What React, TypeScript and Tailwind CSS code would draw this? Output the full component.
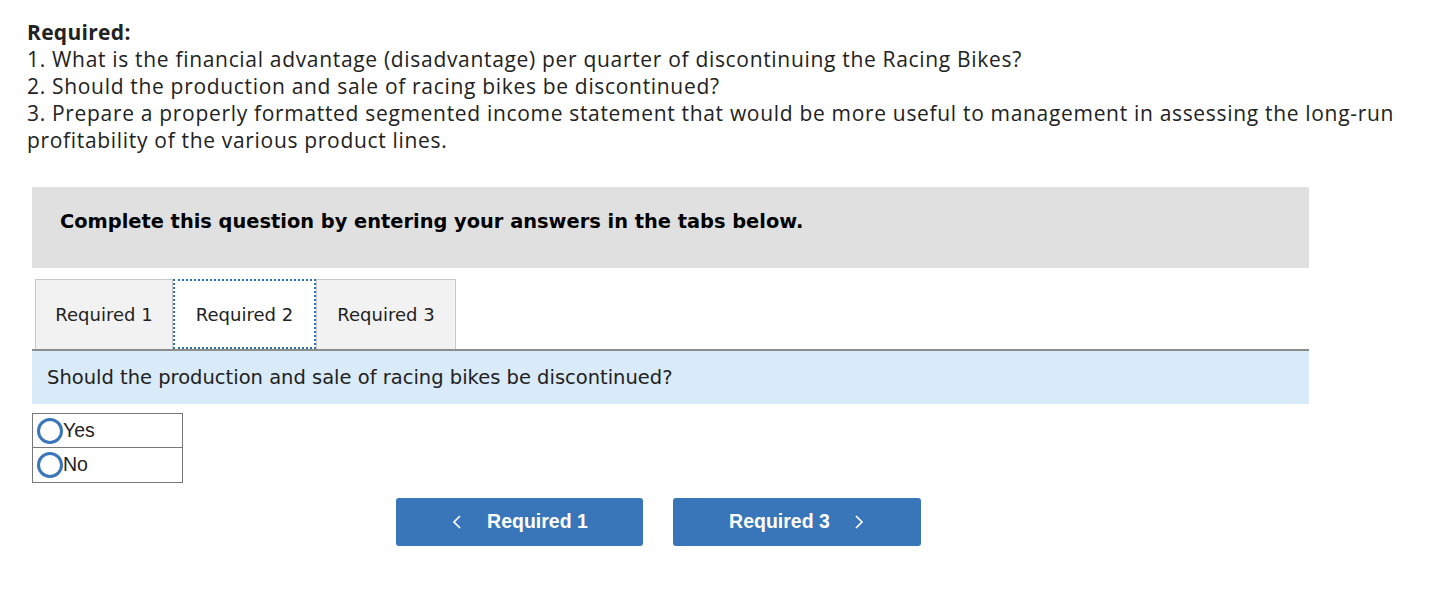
import { FC } from "react";

const Radio: FC<{ label: string; last?: boolean }> = ({ label, last }) => (
    <label className={`flex items-center h-[34px] pl-[4px] ${last ? "" : "border-b border-[#777]"}`}>
        <span className="inline-block w-[26px] h-[26px] rounded-full border-[3px] border-[#3a76b9] bg-white"></span>
        <span className="text-[19.5px] text-[#222] leading-none" style={{ fontFamily: '"Liberation Sans", Arial, sans-serif' }}>{label}</span>
    </label>
);

const App: FC = () => {
    return (
        <div className="w-[1451px] h-[590px] bg-white text-[#222]">
            <div className="pl-[27px] pt-[19px] text-[21px] leading-[27px] tracking-[0.68px]" style={{ fontFamily: '"Open Sans", Lato, sans-serif' }}>
                <div className="font-bold tracking-[0.3px]">Required:</div>
                <div>1. What is the financial advantage (disadvantage) per quarter of discontinuing the Racing Bikes?</div>
                <div>2. Should the production and sale of racing bikes be discontinued?</div>
                <div>3. Prepare a properly formatted segmented income statement that would be more useful to management in assessing the long-run</div>
                <div>profitability of the various product lines.</div>
            </div>

            <div className="ml-[32px] w-[1277px] mt-[33px]" style={{ fontFamily: '"DejaVu Sans", Verdana, sans-serif' }}>
                <div className="h-[81px] bg-[#e0e0e0] flex items-center pl-[28px] pb-[12px]">
                    <span className="font-bold text-[19.4px] text-black">Complete this question by entering your answers in the tabs below.</span>
                </div>

                <div className="mt-[11px] flex pl-[3px] h-[70px]">
                    <div className="w-[138px] bg-[#f2f2f2] border border-b-0 border-[#c8c8c8] flex items-center justify-center text-[18px] text-[#222]">Required 1</div>
                    <div className="w-[143px] bg-white border-2 border-dotted border-[#2f6fb8] flex items-center justify-center text-[18px] text-[#222]">Required 2</div>
                    <div className="w-[140px] bg-[#f2f2f2] border border-b-0 border-[#c8c8c8] flex items-center justify-center text-[18px] text-[#222]">Required 3</div>
                </div>

                <div className="h-[55px] bg-[#d9eaf8] border-t-2 border-[#8d8d8d] flex items-center pl-[15px]">
                    <span className="text-[19.5px] text-[#222]">Should the production and sale of racing bikes be discontinued?</span>
                </div>

                <div className="mt-[9px] w-[151px] border border-[#777]">
                    <Radio label="Yes" />
                    <Radio label="No" last />
                </div>

                <div className="mt-[15px] flex gap-[30px] pl-[364px]" style={{ fontFamily: '"Liberation Sans", Arial, sans-serif' }}>
                    <button className="w-[247px] h-[48px] bg-[#3875b9] rounded-[3px] text-white font-bold text-[19.5px] flex items-center justify-center">
                        <svg width="12" height="16" viewBox="0 0 12 16" className="mr-[24px]" fill="none" stroke="white" strokeWidth="1.7"><path d="M9 2 L3 8 L9 14" /></svg>
                        Required 1
                    </button>
                    <button className="w-[248px] h-[48px] bg-[#3875b9] rounded-[3px] text-white font-bold text-[19.5px] flex items-center justify-center">
                        Required 3
                        <svg width="12" height="16" viewBox="0 0 12 16" className="ml-[23px]" fill="none" stroke="white" strokeWidth="1.7"><path d="M3 2 L9 8 L3 14" /></svg>
                    </button>
                </div>
            </div>
        </div>
    );
};

export default App;
